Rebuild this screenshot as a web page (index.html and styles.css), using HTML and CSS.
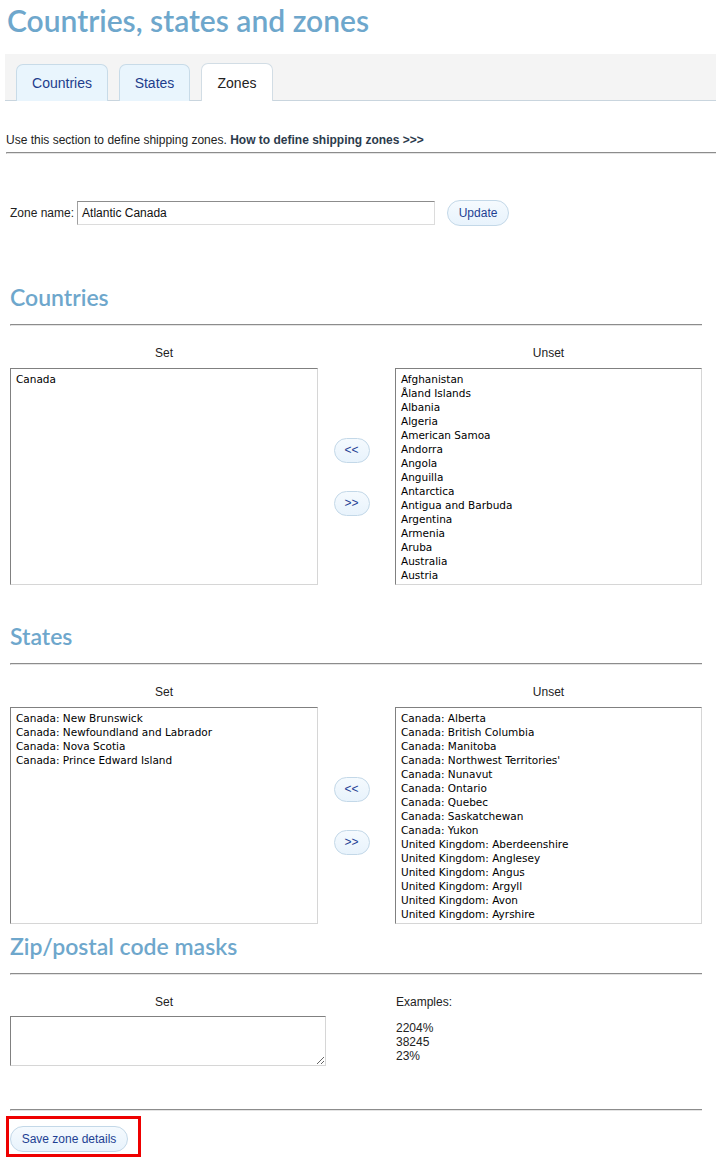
FILE: index.html
```html
<!DOCTYPE html>
<html>
<head>
<meta charset="utf-8">
<link rel="stylesheet" href="styles.css">
</head>
<body>
<h1 class="title">Countries, states and zones</h1>
<div class="tabbar">
  <div class="tab tab-countries">Countries</div>
  <div class="tab tab-states">States</div>
  <div class="tab tab-zones active">Zones</div>
</div>
<p class="desc">Use this section to define shipping zones. <b>How to define shipping zones &gt;&gt;&gt;</b></p>
<div class="rule rule-top"></div>

<div class="content">
  <div class="zone-row">
    <label class="zone-label">Zone name:</label>
    <div class="text-input">Atlantic Canada</div>
    <button class="btn btn-update">Update</button>
  </div>

  <h2 class="section-title first">Countries</h2>
  <div class="rule"></div>
  <div class="picker">
    <div class="col-label">Set</div>
    <div></div>
    <div class="col-label">Unset</div>
    <div class="listbox">
      <div>Canada</div>
    </div>
    <div class="movers">
      <button class="btn btn-move">&lt;&lt;</button>
      <button class="btn btn-move">&gt;&gt;</button>
    </div>
    <div class="listbox">
      <div>Afghanistan</div>
      <div>Åland Islands</div>
      <div>Albania</div>
      <div>Algeria</div>
      <div>American Samoa</div>
      <div>Andorra</div>
      <div>Angola</div>
      <div>Anguilla</div>
      <div>Antarctica</div>
      <div>Antigua and Barbuda</div>
      <div>Argentina</div>
      <div>Armenia</div>
      <div>Aruba</div>
      <div>Australia</div>
      <div>Austria</div>
    </div>
  </div>

  <h2 class="section-title states">States</h2>
  <div class="rule"></div>
  <div class="picker">
    <div class="col-label">Set</div>
    <div></div>
    <div class="col-label">Unset</div>
    <div class="listbox">
      <div>Canada: New Brunswick</div>
      <div>Canada: Newfoundland and Labrador</div>
      <div>Canada: Nova Scotia</div>
      <div>Canada: Prince Edward Island</div>
    </div>
    <div class="movers">
      <button class="btn btn-move">&lt;&lt;</button>
      <button class="btn btn-move">&gt;&gt;</button>
    </div>
    <div class="listbox">
      <div>Canada: Alberta</div>
      <div>Canada: British Columbia</div>
      <div>Canada: Manitoba</div>
      <div>Canada: Northwest Territories'</div>
      <div>Canada: Nunavut</div>
      <div>Canada: Ontario</div>
      <div>Canada: Quebec</div>
      <div>Canada: Saskatchewan</div>
      <div>Canada: Yukon</div>
      <div>United Kingdom: Aberdeenshire</div>
      <div>United Kingdom: Anglesey</div>
      <div>United Kingdom: Angus</div>
      <div>United Kingdom: Argyll</div>
      <div>United Kingdom: Avon</div>
      <div>United Kingdom: Ayrshire</div>
    </div>
  </div>

  <h2 class="section-title zip">Zip/postal code masks</h2>
  <div class="rule"></div>
  <div class="zip-grid">
    <div class="zip-set">
      <div class="col-label">Set</div>
      <textarea class="mask-area"></textarea>
    </div>
    <div class="examples">
      <div class="ex-title">Examples:</div>
      <div class="ex-list">
        <div>2204%</div>
        <div>38245</div>
        <div>23%</div>
      </div>
    </div>
  </div>

  <div class="rule rule-bottom"></div>
  <div class="highlight">
    <button class="btn btn-save">Save zone details</button>
  </div>
</div>
</body>
</html>
```

FILE: styles.css
```css
html, body {
  margin: 0;
  padding: 0;
  background: #fff;
}
body {
  font-family: "Liberation Sans", Arial, sans-serif;
  font-size: 12px;
  color: #222;
  width: 716px;
}
.title {
  margin: 0;
  padding: 0 0 0 7px;
  font-family: Lato, "Open Sans", sans-serif;
  font-weight: 600;
  font-size: 30px;
  line-height: 40px;
  color: #6ea7cc;
  height: 54px;
  box-sizing: border-box;
}
.tabbar {
  margin-left: 5px;
  height: 47px;
  box-sizing: border-box;
  background: #f4f4f4;
  border-bottom: 1px solid #c9d5de;
  display: flex;
  align-items: flex-end;
  padding-left: 11px;
  gap: 11px;
}
.tab {
  height: 37px;
  box-sizing: border-box;
  margin-bottom: -1px;
  border: 1px solid #c8dbe8;
  border-bottom: none;
  border-radius: 7px 7px 0 0;
  background: #e9f5fd;
  color: #1d3d8c;
  font-size: 14px;
  display: flex;
  align-items: center;
  justify-content: center;
}
.tab-countries { width: 92px; }
.tab-states { width: 71px; }
.tab-zones { width: 72px; }
.tab.active {
  background: #fff;
  color: #222;
  height: 38px;
  border-color: #d2dde5;
}
.desc {
  margin: 0;
  padding: 31px 0 0 6px;
  height: 51px;
  box-sizing: border-box;
  font-size: 12px;
  line-height: 16px;
  color: #222;
}
.desc b {
  color: #2c3b4c;
}
.rule {
  border-top: 1px solid #8c8c8c;
  border-bottom: 1px solid #e4e4e4;
  border-left: 1px solid #a8a8a8;
  height: 2px;
  box-sizing: border-box;
}
.rule-top {
  margin-left: 6px;
}
.content {
  padding: 0 14px 0 10px;
}
.zone-row {
  display: flex;
  align-items: center;
  margin-top: 46px;
  height: 26px;
}
.zone-label {
  font-size: 12px;
  margin-right: 3px;
}
.text-input {
  width: 358px;
  height: 24px;
  box-sizing: border-box;
  border: 1px solid #a0a0a0;
  border-right-color: #dcdcdc;
  border-bottom-color: #dcdcdc;
  border-top-color: #8c8c8c;
  padding: 0 4px;
  font-size: 12px;
  line-height: 22px;
  color: #111;
  margin-right: 12px;
}
.btn {
  font-family: "Liberation Sans", Arial, sans-serif;
  font-size: 12px;
  color: #1d3f93;
  background: linear-gradient(#f5fafe, #e8f3fc);
  border: 1px solid #c3d8e8;
  border-radius: 13px;
  padding: 0;
  margin: 0;
  height: 26px;
  box-sizing: border-box;
  cursor: pointer;
}
.btn-update {
  width: 62px;
}
.section-title {
  margin: 0;
  font-family: Lato, "Open Sans", sans-serif;
  font-weight: 600;
  font-size: 23px;
  line-height: 30px;
  color: #6ea7cc;
  height: 42px;
  box-sizing: border-box;
}
.section-title.first {
  margin-top: 56px;
}
.section-title.states {
  margin-top: 36px;
}
.section-title.zip {
  margin-top: 7px;
}
.picker {
  display: grid;
  grid-template-columns: 308px 77px 307px;
  grid-template-rows: 42px 217px;
}
.col-label {
  text-align: center;
  font-size: 12px;
  line-height: 14px;
  padding-top: 20px;
  color: #222;
}
.listbox {
  box-sizing: border-box;
  border: 1px solid #808080;
  border-right-color: #d6d6d6;
  border-bottom-color: #d6d6d6;
  padding: 3px 5px;
  font-family: "DejaVu Sans", sans-serif;
  font-size: 10.5px;
  line-height: 14px;
  color: #000;
  overflow: hidden;
  white-space: nowrap;
}
.movers {
  display: flex;
  flex-direction: column;
  align-items: center;
  justify-content: center;
  gap: 28px;
  padding-right: 10px;
}
.btn-move {
  width: 36px;
  height: 25px;
  font-size: 12px;
}
.zip-grid {
  display: grid;
  grid-template-columns: 385px 1fr;
  height: 134px;
}
.zip-set .col-label {
  width: 308px;
}
.mask-area {
  display: block;
  margin-top: 7px;
  width: 316px;
  height: 50px;
  box-sizing: border-box;
  border: 1px solid #808080;
  border-right-color: #d6d6d6;
  border-bottom-color: #d6d6d6;
  padding: 2px;
  resize: both;
  font-family: "Liberation Sans", Arial, sans-serif;
}
.examples {
  padding-top: 20px;
  font-size: 12px;
  line-height: 14px;
  padding-left: 1px;
}
.ex-list {
  margin-top: 12px;
}
.highlight {
  display: inline-block;
  margin: 5px 0 0 -4px;
  border: 3px solid #ee0000;
  padding: 7px 10px 2px 1px;
}
.btn-save {
  width: 118px;
  display: block;
}
```
